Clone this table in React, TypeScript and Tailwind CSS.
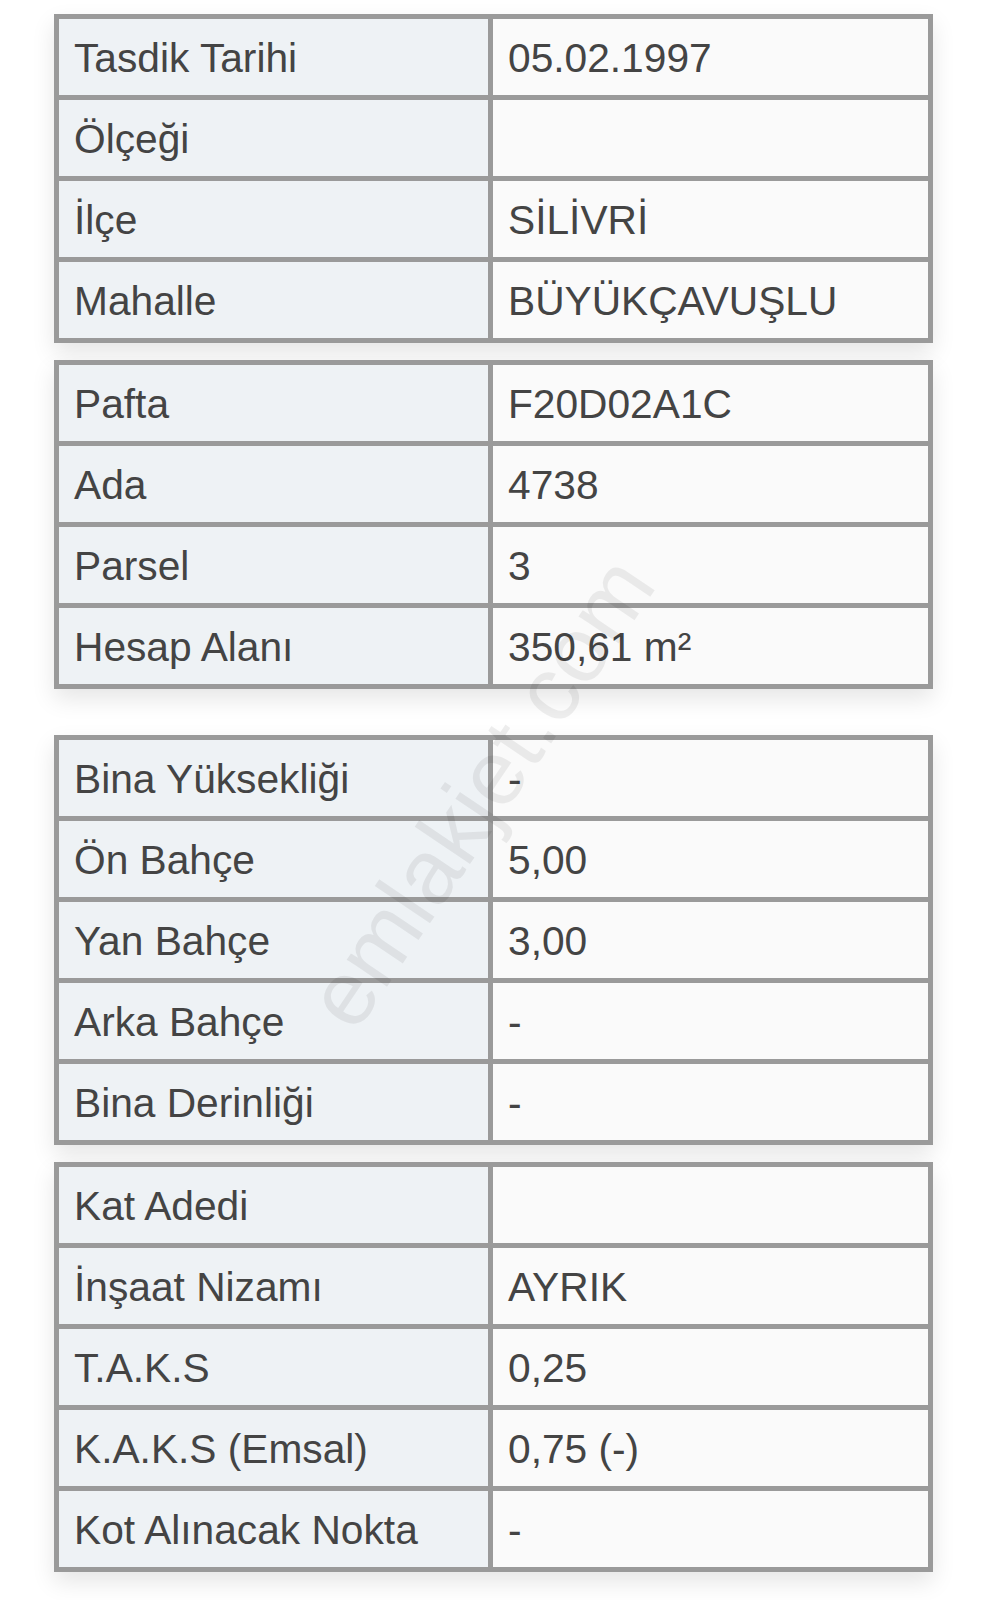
import React from "react";

type Row = [string, string];

const tables: { rows: Row[]; mt: string }[] = [
  {
    mt: "mt-0",
    rows: [
      ["Tasdik Tarihi", "05.02.1997"],
      ["Ölçeği", ""],
      ["İlçe", "SİLİVRİ"],
      ["Mahalle", "BÜYÜKÇAVUŞLU"],
    ],
  },
  {
    mt: "mt-[17px]",
    rows: [
      ["Pafta", "F20D02A1C"],
      ["Ada", "4738"],
      ["Parsel", "3"],
      ["Hesap Alanı", "350,61 m²"],
    ],
  },
  {
    mt: "mt-[46px]",
    rows: [
      ["Bina Yüksekliği", "-"],
      ["Ön Bahçe", "5,00"],
      ["Yan Bahçe", "3,00"],
      ["Arka Bahçe", "-"],
      ["Bina Derinliği", "-"],
    ],
  },
  {
    mt: "mt-[17px]",
    rows: [
      ["Kat Adedi", ""],
      ["İnşaat Nizamı", "AYRIK"],
      ["T.A.K.S", "0,25"],
      ["K.A.K.S (Emsal)", "0,75 (-)"],
      ["Kot Alınacak Nokta", "-"],
    ],
  },
];

export default function App() {
  return (
    <div
      className="relative w-[1007px] h-[1600px] bg-white overflow-hidden"
      style={{ fontFamily: '"Liberation Sans", Arial, sans-serif' }}
    >
      <div className="pl-[54px] pt-[14px] flex flex-col">
        {tables.map((t, ti) => (
          <div
            key={ti}
            className={`${t.mt} w-[879px] grid grid-cols-[429px_435px] gap-[5px] p-[5px] bg-[#9a9a9a] shadow-[0_10px_22px_rgba(0,0,0,0.10)]`}
          >
            {t.rows.map(([k, v], ri) => (
              <React.Fragment key={ri}>
                <div className="h-[76px] bg-[#eef2f5] flex items-center pl-[15px] pt-[2px] text-[40.7px] leading-none text-[#444444]">
                  {k}
                </div>
                <div className="h-[76px] bg-[#fafafa] flex items-center pl-[15px] pt-[2px] text-[40.7px] leading-none text-[#444444]">
                  {v}
                </div>
              </React.Fragment>
            ))}
          </div>
        ))}
      </div>
      <div
        className="absolute pointer-events-none select-none text-[92px] leading-none text-[rgba(0,0,0,0.065)] whitespace-nowrap"
        style={{ left: 480, top: 792, transform: "translate(-50%, -50%) rotate(-56deg)" }}
      >
        emlakjet.com
      </div>
    </div>
  );
}
